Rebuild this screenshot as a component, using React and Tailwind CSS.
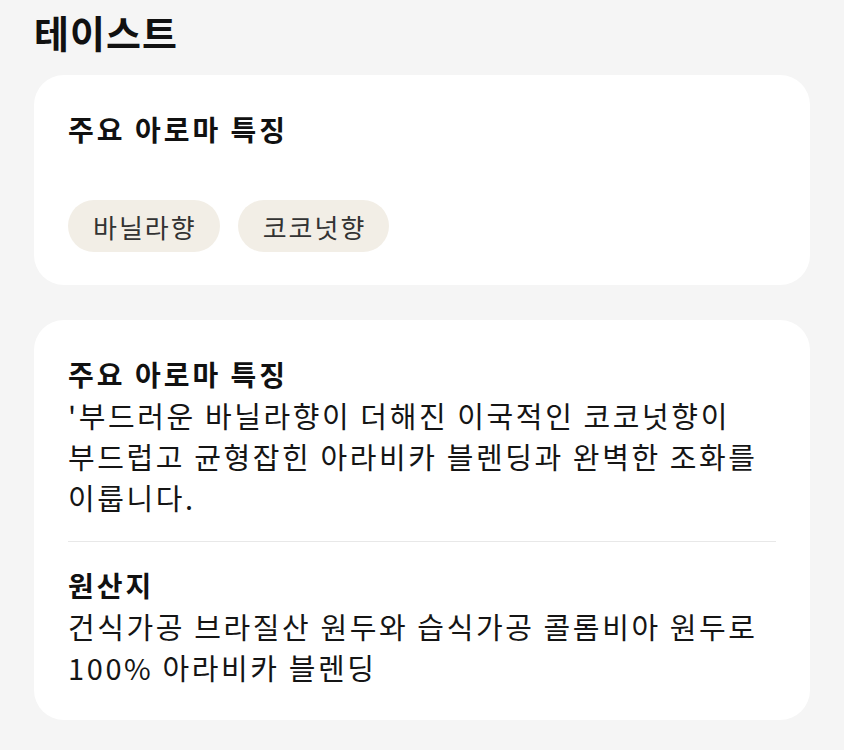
export default function App() {
  const font = { fontFamily: '"Noto Sans CJK KR", "Noto Sans", sans-serif' };
  return (
    <div className="min-h-[750px] w-[844px] bg-[#f5f5f5] px-[34px] pt-[7px] pb-[30px] break-keep" style={font}>
      <h1 className="text-[38px] leading-[50px] font-bold text-[#111] tracking-[1px] mb-[18px]">테이스트</h1>

      <div className="bg-white rounded-[30px] px-[34px] pt-[34px] pb-[33px]">
        <h2 className="text-[28px] leading-[40px] font-bold text-[#111] tracking-[3px]">주요 아로마 특징</h2>
        <div className="flex gap-[18px] mt-[51px]">
          <span className="h-[52px] flex items-center pl-[25px] pr-[23px] rounded-full bg-[#f2eee6] text-[26px] text-[#333] tracking-[2px]">바닐라향</span>
          <span className="h-[52px] flex items-center pl-[25px] pr-[23px] rounded-full bg-[#f2eee6] text-[26px] text-[#333] tracking-[2px]">코코넛향</span>
        </div>
      </div>

      <div className="bg-white rounded-[30px] px-[34px] pt-[34px] pb-[32px] mt-[35px]">
        <h2 className="text-[28px] leading-[41px] font-bold text-[#111] tracking-[3px]">주요 아로마 특징</h2>
        <p className="text-[29px] leading-[41px] text-[#151515] tracking-[2.6px] break-keep">
          '부드러운 바닐라향이 더해진 이국적인 코코넛향이 부드럽고 균형잡힌 아라비카 블렌딩과 완벽한 조화를 이룹니다.
        </p>
        <div className="h-px bg-[#e8e8e8] my-[23px]" />
        <h2 className="text-[28px] leading-[41px] font-bold text-[#111] tracking-[3px]">원산지</h2>
        <p className="text-[29px] leading-[41px] text-[#151515] tracking-[2.6px] break-keep">
          건식가공 브라질산 원두와 습식가공 콜롬비아 원두로 100% 아라비카 블렌딩
        </p>
      </div>
    </div>
  );
}
